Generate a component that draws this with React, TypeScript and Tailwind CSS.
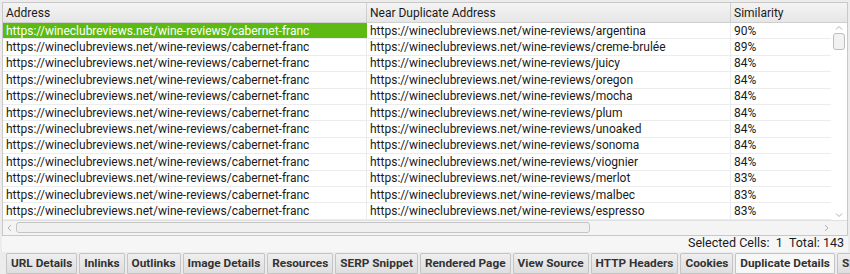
const rows: [string, string][] = [
  ["argentina", "90%"],
  ["creme-brulée", "89%"],
  ["juicy", "84%"],
  ["oregon", "84%"],
  ["mocha", "84%"],
  ["plum", "84%"],
  ["unoaked", "84%"],
  ["sonoma", "84%"],
  ["viognier", "84%"],
  ["merlot", "83%"],
  ["malbec", "83%"],
  ["espresso", "83%"],
];

const tabs = [
  "URL Details",
  "Inlinks",
  "Outlinks",
  "Image Details",
  "Resources",
  "SERP Snippet",
  "Rendered Page",
  "View Source",
  "HTTP Headers",
  "Cookies",
  "Duplicate Details",
  "SERP",
];

export default function App() {
  return (
    <div
      className="w-[850px] h-[274px] bg-[#ececec] overflow-hidden text-[12px] text-[#1a1a1a] flex flex-col"
      style={{ fontFamily: "Roboto, 'Liberation Sans', sans-serif" }}
    >
      <div className="mt-[2px] mx-[2px] flex flex-col border border-[#c8c8c8] bg-white h-[234px]">
        <div className="flex flex-1 min-h-0">
          <div className="flex-1 flex flex-col">
            {/* header */}
            <div className="flex h-[20px] bg-gradient-to-b from-[#f4f4f4] to-[#e6e6e6] border-b border-[#cfcfcf] items-center">
              <div className="w-[364px] pl-[3px] border-r border-[#cfcfcf] h-full flex items-center">Address</div>
              <div className="w-[364px] pl-[3px] border-r border-[#cfcfcf] h-full flex items-center">Near Duplicate Address</div>
              <div className="flex-1 pl-[3px] h-full flex items-center">Similarity</div>
            </div>
            {rows.map(([slug, sim], i) => (
              <div key={slug} className="flex h-[16.4px] border-b border-[#ececec] items-center">
                <div
                  className={
                    i === 0
                      ? "w-[364px] pl-[3px] h-full flex items-center bg-[#5cba12] text-white border-r border-[#5cba12]"
                      : "w-[364px] pl-[3px] h-full flex items-center border-r border-[#ececec]"
                  }
                >
                  https://wineclubreviews.net/wine-reviews/cabernet-franc
                </div>
                <div className="w-[364px] pl-[3px] h-full flex items-center border-r border-[#ececec]">
                  https://wineclubreviews.net/wine-reviews/{slug}
                </div>
                <div className="flex-1 pl-[3px] h-full flex items-center">{sim}</div>
              </div>
            ))}
          </div>
          {/* vertical scrollbar */}
          <div className="w-[16px] flex flex-col items-center bg-white">
            <div className="h-[20px] w-full bg-gradient-to-b from-[#f4f4f4] to-[#e6e6e6] border-b border-[#cfcfcf]" />
            <svg width="10" height="8" viewBox="0 0 10 8" className="mt-[1px]">
              <path d="M2 5.5 L5 2.5 L8 5.5" fill="none" stroke="#b0b0b0" strokeWidth="1" />
            </svg>
            <div className="w-[12px] h-[17px] mt-[1px] rounded-[3px] border border-[#bdbdbd] bg-[#f2f2f2]" />
            <div className="flex-1" />
            <svg width="10" height="8" viewBox="0 0 10 8" className="mb-[1px]">
              <path d="M2 2.5 L5 5.5 L8 2.5" fill="none" stroke="#b0b0b0" strokeWidth="1" />
            </svg>
          </div>
        </div>
        {/* horizontal scrollbar */}
        <div className="h-[15px] flex items-center bg-[#f4f4f4] border-t border-[#e0e0e0]">
          <svg width="10" height="10" viewBox="0 0 10 10" className="ml-[2px]">
            <path d="M6 2 L3 5 L6 8" fill="none" stroke="#b0b0b0" strokeWidth="1" />
          </svg>
          <div className="w-[574px] h-[11px] ml-[1px] rounded-[3px] border border-[#c4c4c4] bg-[#f0f0f0]" />
          <div className="flex-1" />
          <svg width="10" height="10" viewBox="0 0 10 10" className="mr-[16px]">
            <path d="M4 2 L7 5 L4 8" fill="none" stroke="#b0b0b0" strokeWidth="1" />
          </svg>
        </div>
      </div>
      <div className="h-[16px] mx-[2px] bg-[#f6f6f6] flex items-center justify-end pr-[4px] text-[12.5px]">
        Selected Cells:&nbsp;&nbsp;1&nbsp;&nbsp;Total:&nbsp;143
      </div>
      <div className="flex gap-[2px] pl-[6px] mt-[1px] items-stretch h-[22px] text-[11.8px]">
        {tabs.map((t) => (
          <div
            key={t}
            className={
              t === "Duplicate Details"
                ? "shrink-0 px-[4px] flex items-center font-bold text-[#333] bg-[#f7f7f7] border border-[#c4c4c4] rounded-t-[2px]"
                : "shrink-0 px-[4px] flex items-center font-bold text-[#333] bg-gradient-to-b from-[#efefef] to-[#dedede] border border-[#c4c4c4] rounded-t-[2px]"
            }
          >
            {t}
          </div>
        ))}
      </div>
    </div>
  );
}
